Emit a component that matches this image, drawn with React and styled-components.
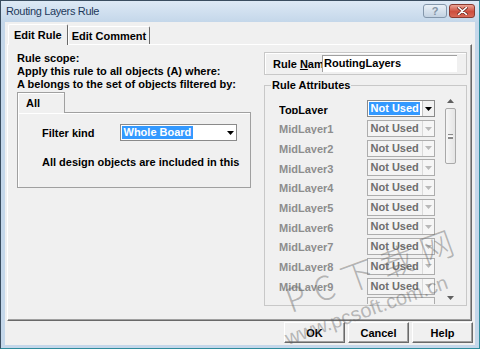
import React from "react"
import styled, { createGlobalStyle } from "styled-components"

const FONT = `"Liberation Sans", Arial, sans-serif`

const layers = [
  "TopLayer",
  "MidLayer1",
  "MidLayer2",
  "MidLayer3",
  "MidLayer4",
  "MidLayer5",
  "MidLayer6",
  "MidLayer7",
  "MidLayer8",
  "MidLayer9",
]

const DownArrow = ({ color }) => (
  <svg width="7" height="4" viewBox="0 0 7 4">
    <path d="M0 0h7L3.5 4z" fill={color} />
  </svg>
)

const UpArrow = ({ color }) => (
  <svg width="7" height="4" viewBox="0 0 7 4">
    <path d="M0 4h7L3.5 0z" fill={color} />
  </svg>
)

export default function App() {
  return (
    <>
      <GlobalStyle />
      <Window>
        <TitleBar>
          <TitleText>Routing Layers Rule</TitleText>
          <CaptionButtons>
            <HelpButton>?</HelpButton>
            <CloseButton>
              <svg width="11" height="8" viewBox="0 0 11 8">
                <path
                  d="M1.5 0.5l8 7M9.5 0.5l-8 7"
                  stroke="#6b2a22"
                  strokeWidth="3"
                  strokeLinecap="round"
                />
                <path
                  d="M1.5 0.5l8 7M9.5 0.5l-8 7"
                  stroke="#fff"
                  strokeWidth="1.6"
                  strokeLinecap="round"
                />
              </svg>
            </CloseButton>
          </CaptionButtons>
        </TitleBar>

        <Client>
          <TabStrip>
            <Tab $active>Edit Rule</Tab>
            <Tab>Edit Comment</Tab>
          </TabStrip>

          <TabPage>
            <ScopeColumn>
              <ScopeText>
                Rule scope:
                <br />
                Apply this rule to all objects (A) where:
                <br />
                A belongs to the set of objects filtered by:
              </ScopeText>

              <InnerTabStrip>
                <InnerTab>All</InnerTab>
              </InnerTabStrip>
              <InnerPage>
                <FilterRow>
                  <FilterLabel>Filter kind</FilterLabel>
                  <Combo $width={117} $on>
                    <ComboText $on>Whole Board</ComboText>
                    <ComboButton $plain>
                      <DownArrow color="#000" />
                    </ComboButton>
                  </Combo>
                </FilterRow>
                <DescText>All design objects are included in this</DescText>
              </InnerPage>
            </ScopeColumn>

            <RuleColumn>
              <NamePanel>
                <NameLabel>
                  Rule <u>N</u>am
                </NameLabel>
                <NameInput>RoutingLayers</NameInput>
              </NamePanel>

              <AttrGroup>
                <AttrLegend>Rule Attributes</AttrLegend>
                <ListBody>
                  <Rows>
                    {layers.map((name, i) => (
                      <Row key={name}>
                        <RowLabel $on={i === 0}>{name}</RowLabel>
                        <Combo $width={68} $on={i === 0}>
                          <ComboText $on={i === 0}>Not Used</ComboText>
                          <ComboButton $on={i === 0}>
                            <DownArrow color={i === 0 ? "#000" : "#b9b9b9"} />
                          </ComboButton>
                        </Combo>
                      </Row>
                    ))}
                    <Row>
                      <RowLabel />
                      <Combo $width={68} />
                    </Row>
                  </Rows>
                  <ScrollBar>
                    <ScrollArrow>
                      <UpArrow color="#606060" />
                    </ScrollArrow>
                    <Thumb>
                      <Grip />
                    </Thumb>
                    <ScrollArrow $bottom>
                      <DownArrow color="#606060" />
                    </ScrollArrow>
                  </ScrollBar>
                </ListBody>
              </AttrGroup>
            </RuleColumn>
          </TabPage>

          <ButtonRow>
            <Button>OK</Button>
            <Button>Cancel</Button>
            <Button>Help</Button>
          </ButtonRow>
        </Client>

        <WatermarkBig>PC下载网</WatermarkBig>
        <WatermarkSmall>www.pcsoft.com.cn</WatermarkSmall>
      </Window>
    </>
  )
}

const GlobalStyle = createGlobalStyle`
  html, body {
    margin: 0;
    padding: 0;
    background: #f0f0f0;
  }
  body {
    font-family: ${FONT};
  }
  * {
    box-sizing: border-box;
  }
`

const Window = styled.div`
  position: relative;
  width: 480px;
  height: 349px;
  display: flex;
  flex-direction: column;
  padding: 0 4px 3px 4px;
  background: linear-gradient(#dde9f5 0, #c4d7ea 21px, #c4d7ea 100%);
  border: 1px solid #3a4d60;
  border-right-color: #2f8c9c;
  border-bottom-color: #2f8c9c;
  overflow: hidden;
`

const TitleBar = styled.div`
  height: 21px;
  display: flex;
  align-items: flex-start;
  padding-left: 1px;
`

const TitleText = styled.span`
  font: 11px ${FONT};
  letter-spacing: -0.35px;
  line-height: 21px;
  color: #1e395b;
`

const CaptionButtons = styled.div`
  margin-left: auto;
  margin-top: 3px;
  display: flex;
  gap: 2px;
`

const HelpButton = styled.div`
  width: 24px;
  height: 14px;
  border: 1px solid #8497ab;
  border-radius: 3px;
  background: linear-gradient(#e9f0f7, #c3d2e2);
  display: flex;
  align-items: center;
  justify-content: center;
  font: bold 11px ${FONT};
  color: #8393a4;
`

const CloseButton = styled.div`
  width: 26px;
  height: 14px;
  border: 1px solid #8a3a30;
  border-radius: 3px;
  background: linear-gradient(#eba596, #cd4e3e 55%, #d86a58);
  display: flex;
  align-items: center;
  justify-content: center;
`

const Client = styled.div`
  flex: 1;
  display: flex;
  flex-direction: column;
  padding: 2px;
  background: #f0f0f0;
`

const TabStrip = styled.div`
  height: 20px;
  display: flex;
  align-items: flex-end;
  padding-left: 1px;
`

const Tab = styled.div`
  position: relative;
  z-index: ${p => (p.$active ? 1 : 0)};
  height: ${p => (p.$active ? 21 : 18)}px;
  margin-bottom: ${p => (p.$active ? -1 : 0)}px;
  padding: ${p => (p.$active ? "0 5px 1px" : "0 3px")};
  display: flex;
  align-items: center;
  background: #f0f0f0;
  border: 1px solid;
  border-color: #fff #696969 transparent #fff;
  border-bottom: none;
  border-radius: 2px 2px 0 0;
  font: bold 11px ${FONT};
  color: #000;
`

const TabPage = styled.div`
  flex: 1;
  margin-right: 1px;
  padding: 7px 0 0 9px;
  display: grid;
  grid-template-columns: 234px 203px;
  column-gap: 13px;
  align-content: start;
  border: 1px solid;
  border-color: #fff #696969 #696969 #fff;
  box-shadow: inset -1px -1px 0 #a0a0a0;
`

const ScopeColumn = styled.div`
  display: flex;
  flex-direction: column;
`

const ScopeText = styled.p`
  margin: 0;
  font: bold 11px ${FONT};
  line-height: 13px;
  color: #000;
  white-space: nowrap;
`

const InnerTabStrip = styled.div`
  margin-top: 1px;
  height: 20px;
  display: flex;
`

const InnerTab = styled.div`
  position: relative;
  z-index: 1;
  width: 48px;
  height: 21px;
  padding: 0 0 1px 8px;
  display: flex;
  align-items: center;
  background: #f0f0f0;
  border: 1px solid #a0a0a0;
  border-bottom: none;
  box-shadow: inset 1px 1px 0 #fff;
  font: bold 11px ${FONT};
  color: #000;
`

const InnerPage = styled.div`
  height: 76px;
  padding: 11px 0 0 24px;
  border: 1px solid #a0a0a0;
  box-shadow: inset 1px 1px 0 #fff;
  overflow: hidden;
`

const FilterRow = styled.div`
  display: flex;
  align-items: center;
`

const FilterLabel = styled.span`
  width: 78px;
  font: bold 11px ${FONT};
  color: #000;
`

const DescText = styled.div`
  margin-top: 15px;
  font: bold 11px ${FONT};
  line-height: 13px;
  color: #000;
  white-space: nowrap;
`

const Combo = styled.div`
  width: ${p => p.$width}px;
  height: 17px;
  flex-shrink: 0;
  display: flex;
  align-items: center;
  padding-left: 1px;
  background: ${p => (p.$on ? "#fff" : "#f4f4f4")};
  border: 1px solid ${p => (p.$on ? "#8a8a8a" : "#adadad")};
`

const ComboText = styled.span`
  padding: 0 1.5px;
  font: bold 11px ${FONT};
  line-height: 13px;
  white-space: nowrap;
  color: ${p => (p.$on ? "#fff" : "#6e6e6e")};
  background: ${p => (p.$on ? "#3399ff" : "transparent")};
`

const ComboButton = styled.span`
  margin-left: auto;
  width: 12px;
  height: 15px;
  display: flex;
  align-items: center;
  justify-content: center;
  border-left: 1px solid
    ${p => (p.$plain ? "transparent" : p.$on ? "#c4c4c4" : "#dadada")};
  background: ${p => (p.$plain ? "#fff" : p.$on ? "#f2f2f2" : "#f6f6f6")};
`

const RuleColumn = styled.div`
  display: flex;
  flex-direction: column;
`

const NamePanel = styled.div`
  height: 23px;
  display: flex;
  align-items: center;
  padding-left: 8px;
  border: 1px solid #c8c8c8;
  box-shadow: inset 1px 1px 0 #fff;
`

const NameLabel = styled.span`
  width: 49px;
  white-space: nowrap;
  font: bold 11px ${FONT};
  color: #000;
`

const NameInput = styled.div`
  width: 135px;
  height: 17px;
  padding-left: 1px;
  background: #fff;
  border-top: 1px solid #a0a0a0;
  border-left: 1px solid #a0a0a0;
  font: bold 11px ${FONT};
  line-height: 15px;
  color: #000;
`

const AttrGroup = styled.fieldset`
  margin: 4px 0 0;
  padding: 0 0 1px 6px;
  min-width: 0;
  border: 1px solid #c8c8c8;
`

const AttrLegend = styled.legend`
  padding: 0 1px;
  font: bold 11px ${FONT};
  line-height: 13px;
  color: #000;
`

const ListBody = styled.div`
  margin-top: 7px;
  height: 205px;
  display: flex;
  overflow: hidden;
`

const Rows = styled.div`
  padding-left: 8px;
  display: flex;
  flex-direction: column;
`

const Row = styled.div`
  height: 19.7px;
  flex-shrink: 0;
  display: flex;
  align-items: center;
`

const RowLabel = styled.span`
  width: 88px;
  height: 10.5px;
  overflow: hidden;
  font: bold 11px ${FONT};
  line-height: 13px;
  color: ${p => (p.$on ? "#000" : "#8d8d8d")};
`

const ScrollBar = styled.div`
  margin: -5px 0 0 9px;
  width: 13px;
  display: flex;
  flex-direction: column;
  align-items: center;
`

const ScrollArrow = styled.div`
  height: 13px;
  flex-shrink: 0;
  display: flex;
  align-items: center;
  justify-content: center;
  margin-top: ${p => (p.$bottom ? "auto" : "0")};
`

const Thumb = styled.div`
  width: 11px;
  height: 56px;
  margin-top: 1px;
  display: flex;
  align-items: center;
  justify-content: center;
  border: 1px solid #a9a9a9;
  border-radius: 2px;
  background: linear-gradient(90deg, #f6f6f6, #e4e4e4);
`

const Grip = styled.div`
  width: 5px;
  height: 5px;
  border-top: 1px solid #8a8a8a;
  border-bottom: 1px solid #8a8a8a;
  background: linear-gradient(#fff 0 1px, #8a8a8a 1px 2px, #fff 2px);
  background-size: 100% 3px;
  background-position: 0 1px;
  background-repeat: no-repeat;
`

const ButtonRow = styled.div`
  margin-top: 1px;
  height: 21px;
  display: flex;
  justify-content: flex-end;
  gap: 3px;
`

const Button = styled.button`
  width: 61px;
  height: 21px;
  padding: 0;
  background: #f0f0f0;
  border: 1px solid;
  border-color: #fff #6a6a6a #6a6a6a #fff;
  box-shadow: inset -1px -1px 0 #a0a0a0;
  font: bold 11px ${FONT};
  color: #000;
`

const WatermarkBig = styled.div`
  position: absolute;
  left: 291px;
  top: 282px;
  font-family: "Noto Sans CJK SC", sans-serif;
  font-weight: 300;
  font-size: 33px;
  line-height: 33px;
  letter-spacing: 9px;
  white-space: nowrap;
  color: rgba(105, 105, 105, 0.45);
  transform-origin: 0 100%;
  transform: rotate(-20deg);
  pointer-events: none;
`

const WatermarkSmall = styled.div`
  position: absolute;
  left: 288px;
  top: 327px;
  font: 20px ${FONT};
  line-height: 20px;
  white-space: nowrap;
  color: rgba(90, 90, 90, 0.4);
  transform-origin: 0 100%;
  transform: rotate(-19.5deg);
  pointer-events: none;
`
